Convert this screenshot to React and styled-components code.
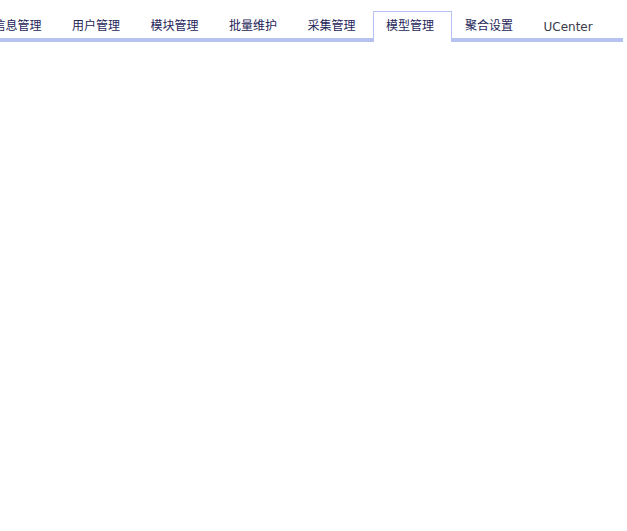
import React from 'react';
import styled, { createGlobalStyle, css } from 'styled-components';

const GlobalStyle = createGlobalStyle`
    html, body {
        margin: 0;
        padding: 0;
        background: #ffffff;
        overflow: hidden;
    }
`;

const Root = styled.div`
    width: 623px;
    padding-top: 11px;
`;

const TabList = styled.ul`
    display: flex;
    align-items: flex-start;
    margin: 0 0 0 -19.5px;
    padding: 0;
    list-style: none;
    height: 27px;
    border-bottom: 4px solid #b6c2f1;
`;

const Tab = styled.li`
    box-sizing: border-box;
    flex: 0 0 78.5px;
    height: 27px;
    padding: 8px 0 0 13px;
    font-family: "Noto Sans CJK SC", "Liberation Sans", sans-serif;
    font-size: 12px;
    line-height: 12px;
    color: #25255a;
    white-space: nowrap;
    cursor: pointer;

    ${({ $latin }) =>
        $latin &&
        css`
            padding-top: 10px;
            font-family: "DejaVu Sans", Verdana, sans-serif;
            color: #3a3a4a;
        `}

    ${({ $active }) =>
        $active &&
        css`
            flex-basis: 79px;
            height: 31px;
            margin-bottom: -4px;
            padding: 7px 0 0 12px;
            background: #ffffff;
            border: 1px solid #b6c2f1;
            border-bottom: none;
        `}
`;

const tabs = [
    { label: '信息管理' },
    { label: '用户管理' },
    { label: '模块管理' },
    { label: '批量维护' },
    { label: '采集管理' },
    { label: '模型管理', active: true },
    { label: '聚合设置' },
    { label: 'UCenter', latin: true },
];

const App = () => {
    return (
        <Root>
            <GlobalStyle />
            <TabList>
                {tabs.map((tab) => (
                    <Tab key={tab.label} $active={tab.active} $latin={tab.latin}>
                        {tab.label}
                    </Tab>
                ))}
            </TabList>
        </Root>
    );
};

export default App;
